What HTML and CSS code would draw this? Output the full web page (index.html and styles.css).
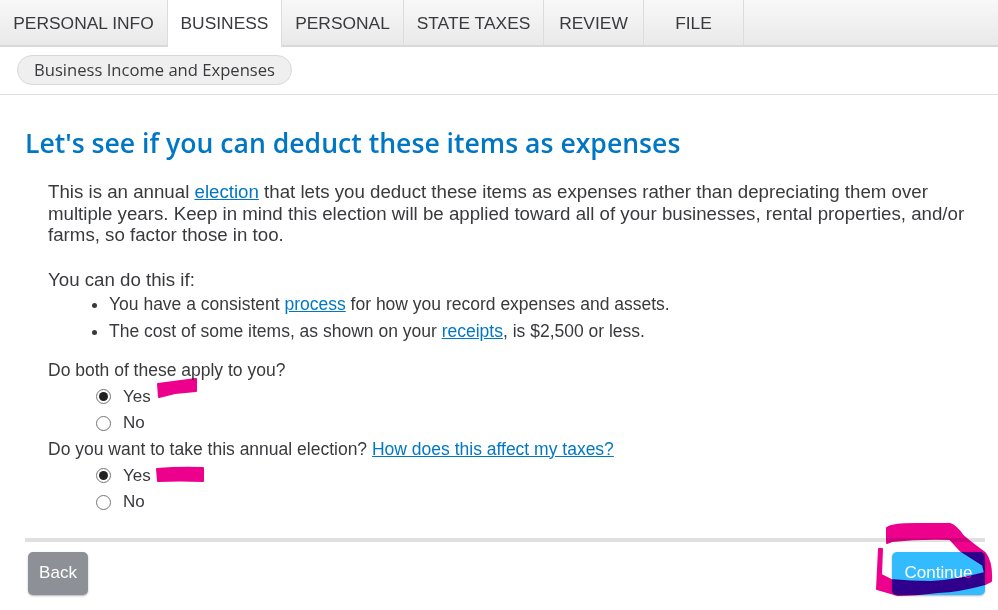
FILE: index.html
```html
<!DOCTYPE html>
<html lang="en">

<head>
    <meta charset="UTF-8">
    <title>Business Income and Expenses</title>
    <link rel="stylesheet" href="styles.css">
</head>

<body>
    <div class="tabs">
        <div class="tab" style="width: 168px">PERSONAL INFO</div>
        <div class="tab active" style="width: 114px">BUSINESS</div>
        <div class="tab" style="width: 122px">PERSONAL</div>
        <div class="tab" style="width: 140px">STATE TAXES</div>
        <div class="tab" style="width: 100px">REVIEW</div>
        <div class="tab" style="width: 100px">FILE</div>
    </div>
    <div class="crumbs">
        <span class="pill">Business Income and Expenses</span>
    </div>
    <div class="main">
        <h1>Let's see if you can deduct these items as expenses</h1>
        <div class="copy">
            <p class="intro">This is an annual <a href="#">election</a> that lets you deduct these items as expenses rather than depreciating them over multiple years. Keep in mind this election will be applied toward all of your businesses, rental properties, and/or farms, so factor those in too.</p>
            <p class="lead">You can do this if:</p>
            <ul>
                <li>You have a consistent <a href="#">process</a> for how you record expenses and assets.</li>
                <li>The cost of some items, as shown on your <a href="#">receipts</a>, is $2,500 or less.</li>
            </ul>
            <div class="question first">Do both of these apply to you?</div>
            <label class="option"><span class="radio on"></span>Yes</label>
            <label class="option"><span class="radio"></span>No</label>
            <div class="question">Do you want to take this annual election? <a href="#">How does this affect my taxes?</a></div>
            <label class="option"><span class="radio on"></span>Yes</label>
            <label class="option"><span class="radio"></span>No</label>
        </div>
        <div class="actions">
            <button type="button" class="btn back">Back</button>
            <button type="button" class="btn continue">Continue</button>
        </div>
    </div>
    <svg class="scribble" width="998" height="610" viewBox="0 0 998 610">
        <path d="M158 384 L196 379 L196 391 L175 393 L159 397 Z" />
        <path d="M157 469 Q180 467 203 468 L203 481 Q180 480 158 481 Z" />
        <path d="M887 528 Q892 524 915 524 L950 524 Q956 526 963 536 Q975 546 985 553 Q992 562 991 581 L985 584 Q960 591 938 592 Q915 595 898 595 L877 589 L879 549 L882 549 L881 575 L891 580 Q910 582 931 582 Q955 581 985 573 L983 565 L961 551 L950 539 Q920 538 892 541 L887 543 Z" />
    </svg>
</body>

</html>
```

FILE: styles.css
```css
* {
    margin: 0px;
    padding: 0px;
    box-sizing: border-box;
}

html,
body {
    width: 998px;
    height: 610px;
    overflow: hidden;
    background: #fff;
}

body {
    position: relative;
    font-family: "Liberation Sans", Arial, sans-serif;
    color: #393a3d;
}

a {
    color: #0077c5;
    text-decoration: underline;
}

.tabs {
    display: flex;
    height: 47px;
    background: linear-gradient(#f8f8f8, #e9e9e9);
    border-bottom: 2px solid #d8d8d8;
}

.tab {
    height: 47px;
    font-size: 17.4px;
    line-height: 47px;
    text-align: center;
    border-right: 1px solid #dcdcdc;
}

.tab.active {
    background: #fff;
}

.crumbs {
    height: 48px;
    padding: 8px 0 0 17px;
    border-bottom: 1px solid #dedede;
}

.pill {
    display: inline-block;
    width: 275px;
    height: 30px;
    font-family: "Open Sans", "Noto Sans", sans-serif;
    font-size: 16.6px;
    line-height: 27px;
    text-align: center;
    background: #efefef;
    border: 1px solid #d8d8d8;
    border-radius: 15px;
}

.main {
    padding: 0 13px 0 25px;
}

h1 {
    margin-top: 31px;
    font-family: "Open Sans", "Noto Sans", sans-serif;
    font-size: 26.6px;
    font-weight: 600;
    line-height: 34px;
    color: #0077c5;
}

.copy {
    padding-left: 23px;
}

.intro {
    margin-top: 21px;
    padding-right: 10px;
    font-size: 18.7px;
    line-height: 21.5px;
}

.lead {
    margin-top: 23px;
    font-size: 18.7px;
    line-height: 22px;
}

ul {
    padding-left: 61px;
    font-size: 17.5px;
    line-height: 27px;
}

.question {
    padding-bottom: 2px;
    font-size: 17.5px;
    line-height: 24px;
}

.question.first {
    margin-top: 13px;
}

.option {
    display: flex;
    align-items: center;
    height: 26.5px;
    padding-left: 48px;
    font-size: 17px;
}

.radio {
    width: 15px;
    height: 15px;
    margin-right: 12px;
    background: #fff;
    border: 1px solid #767676;
    border-radius: 50%;
}

.radio.on {
    padding: 2px;
    background: #222 content-box;
}

.actions {
    display: flex;
    justify-content: space-between;
    align-items: flex-end;
    margin-top: 22px;
    padding: 10px 0 0 3px;
    border-top: 4px solid #e0e0e0;
}

.btn {
    height: 43px;
    font-family: "Liberation Sans", Arial, sans-serif;
    font-size: 17px;
    color: #fff;
    border: 0;
    border-radius: 5px;
    box-shadow: 0 1px 2px rgba(0, 0, 0, 0.3);
}

.back {
    width: 60px;
    background: #8d9096;
}

.continue {
    width: 93px;
    background: #33bbff;
}

/* pen marks drawn over the screenshot */
.scribble {
    position: absolute;
    left: 0;
    top: 0;
    mix-blend-mode: multiply;
    fill: #ec008c;
    stroke: #ec008c;
    stroke-width: 2px;
    stroke-linejoin: round;
}
```
